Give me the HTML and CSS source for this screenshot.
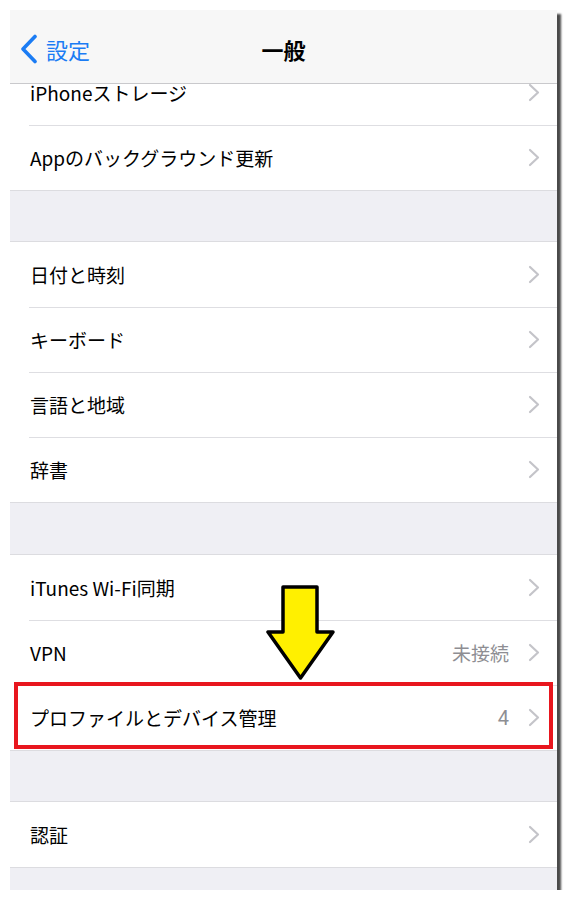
FILE: index.html
```html
<!DOCTYPE html>
<html lang="ja">
<head>
<meta charset="utf-8">
<link rel="stylesheet" href="styles.css">
</head>
<body>
<div class="frame">
  <header class="nav">
    <div class="back">
      <svg class="back-chev" width="20" height="30" viewBox="0 0 20 30"><polyline points="16,2.5 4,15 16,27.5" fill="none" stroke="#1b7cf4" stroke-width="3.6" stroke-linecap="round" stroke-linejoin="round"/></svg>
      <span class="back-label">設定</span>
    </div>
    <div class="title">一般</div>
    <div></div>
  </header>
  <main class="list">
    <section class="group first">
      <div class="row"><span class="label">iPhoneストレージ</span><svg class="chev" width="12" height="19" viewBox="0 0 12 19"><polyline points="2,2 10,9.5 2,17" fill="none" stroke="#c4c4c9" stroke-width="2.2" stroke-linecap="round" stroke-linejoin="round"/></svg></div>
      <div class="row"><span class="label">Appのバックグラウンド更新</span><svg class="chev" width="12" height="19" viewBox="0 0 12 19"><polyline points="2,2 10,9.5 2,17" fill="none" stroke="#c4c4c9" stroke-width="2.2" stroke-linecap="round" stroke-linejoin="round"/></svg></div>
    </section>
    <div class="gap"></div>
    <section class="group">
      <div class="row"><span class="label">日付と時刻</span><svg class="chev" width="12" height="19" viewBox="0 0 12 19"><polyline points="2,2 10,9.5 2,17" fill="none" stroke="#c4c4c9" stroke-width="2.2" stroke-linecap="round" stroke-linejoin="round"/></svg></div>
      <div class="row"><span class="label">キーボード</span><svg class="chev" width="12" height="19" viewBox="0 0 12 19"><polyline points="2,2 10,9.5 2,17" fill="none" stroke="#c4c4c9" stroke-width="2.2" stroke-linecap="round" stroke-linejoin="round"/></svg></div>
      <div class="row"><span class="label">言語と地域</span><svg class="chev" width="12" height="19" viewBox="0 0 12 19"><polyline points="2,2 10,9.5 2,17" fill="none" stroke="#c4c4c9" stroke-width="2.2" stroke-linecap="round" stroke-linejoin="round"/></svg></div>
      <div class="row"><span class="label">辞書</span><svg class="chev" width="12" height="19" viewBox="0 0 12 19"><polyline points="2,2 10,9.5 2,17" fill="none" stroke="#c4c4c9" stroke-width="2.2" stroke-linecap="round" stroke-linejoin="round"/></svg></div>
    </section>
    <div class="gap gap2"></div>
    <section class="group">
      <div class="row"><span class="label">iTunes Wi-Fi同期</span><svg class="chev" width="12" height="19" viewBox="0 0 12 19"><polyline points="2,2 10,9.5 2,17" fill="none" stroke="#c4c4c9" stroke-width="2.2" stroke-linecap="round" stroke-linejoin="round"/></svg></div>
      <div class="row"><span class="label">VPN</span><span class="detail">未接続</span><svg class="chev" width="12" height="19" viewBox="0 0 12 19"><polyline points="2,2 10,9.5 2,17" fill="none" stroke="#c4c4c9" stroke-width="2.2" stroke-linecap="round" stroke-linejoin="round"/></svg></div>
      <div class="row"><span class="label">プロファイルとデバイス管理</span><span class="detail num">4</span><svg class="chev" width="12" height="19" viewBox="0 0 12 19"><polyline points="2,2 10,9.5 2,17" fill="none" stroke="#c4c4c9" stroke-width="2.2" stroke-linecap="round" stroke-linejoin="round"/></svg></div>
    </section>
    <div class="gap"></div>
    <section class="group">
      <div class="row"><span class="label">認証</span><svg class="chev" width="12" height="19" viewBox="0 0 12 19"><polyline points="2,2 10,9.5 2,17" fill="none" stroke="#c4c4c9" stroke-width="2.2" stroke-linecap="round" stroke-linejoin="round"/></svg></div>
    </section>
  </main>
  <div class="highlight"></div>
  <svg class="arrow" width="70" height="98" viewBox="0 0 70 98"><polygon points="17,2 51,2 51,47 67,47 34.5,93 2,47 17,47" fill="#fff000" stroke="#000" stroke-width="3.5" stroke-linejoin="round"/></svg>
</div>
</body>
</html>
```
FILE: styles.css
```css
html, body {
  margin: 0;
  padding: 0;
  background: #fff;
}
body {
  font-family: "Noto Sans CJK JP", "Noto Sans", sans-serif;
}
.frame {
  position: relative;
  margin: 10px 0 0 10px;
  width: 547px;
  height: 880px;
  overflow: hidden;
  background: #efeff4;
  box-shadow: 4px 4px 2px #4a4a4a;
}
.nav {
  position: relative;
  z-index: 2;
  box-sizing: border-box;
  height: 74px;
  padding-top: 5px;
  background: #f7f7f7;
  border-bottom: 1px solid #c9c9cc;
  display: grid;
  grid-template-columns: 1fr auto 1fr;
  align-items: center;
}
.back {
  display: flex;
  align-items: center;
  padding-left: 9px;
  gap: 7px;
  color: #1b7cf4;
  font-size: 22px;
}
.back-chev { display: block; }
.back-label { line-height: 1; }
.title {
  font-size: 22px;
  font-weight: 700;
  color: #000;
}
.list {
  margin-top: -24px;
}
.group {
  background: #fff;
  box-shadow: 0 -1px 0 #dcdce0, 0 1px 0 #dcdce0;
}
.row {
  position: relative;
  height: 65px;
  display: flex;
  align-items: center;
  padding: 0 17px 0 20px;
  font-size: 19px;
  color: #000;
}
.row + .row::before {
  content: "";
  position: absolute;
  left: 19px;
  right: 0;
  top: 0;
  height: 1px;
  background: #dedee2;
}
.label {
  flex: 1;
  white-space: nowrap;
}
.detail {
  color: #8e8e93;
  margin-right: 19px;
}
.num {
  font-family: "Roboto", "Noto Sans", sans-serif;
  font-size: 20px;
}
.chev {
  display: block;
  flex: none;
}
.gap {
  height: 52px;
}
.gap2 {
  height: 53px;
}
.highlight {
  position: absolute;
  left: 4px;
  top: 672px;
  width: 531px;
  height: 59px;
  border: 4px solid #e8161e;
}
.arrow {
  position: absolute;
  left: 256px;
  top: 575px;
}
```
